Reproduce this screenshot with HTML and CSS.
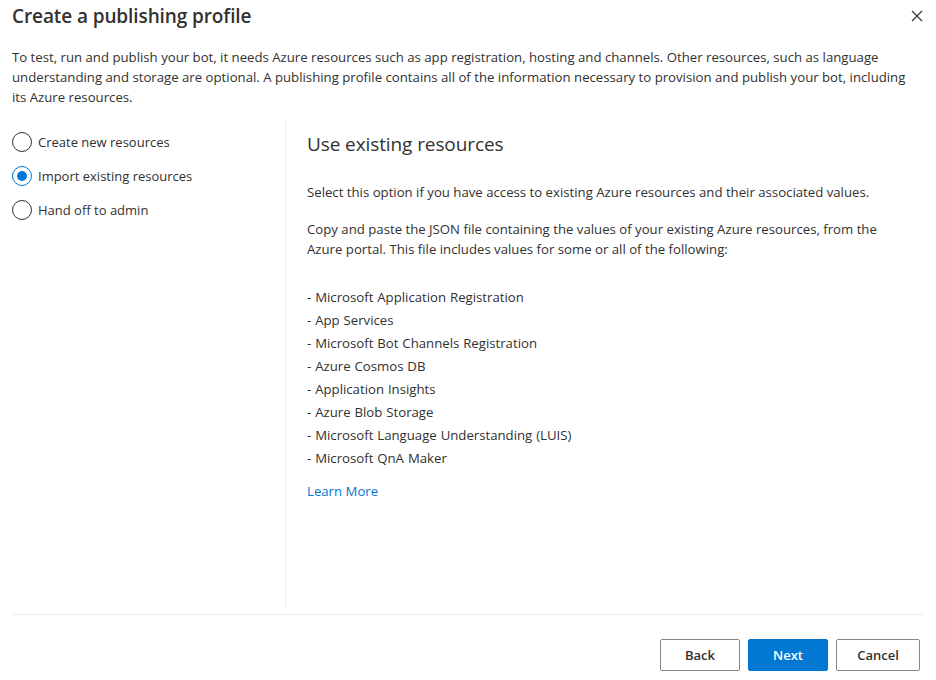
FILE: index.html
```html
<!DOCTYPE html>
<html>
<head>
<meta charset="utf-8">
<link rel="stylesheet" href="styles.css">
</head>
<body>
<div class="dialog">
  <div class="header">
    <h1 class="title">Create a publishing profile</h1>
    <button class="close" aria-label="Close">
      <svg width="12" height="12" viewBox="0 0 12 12"><path d="M1 1 L11 11 M11 1 L1 11" stroke="#323130" stroke-width="1.1" fill="none"/></svg>
    </button>
  </div>
  <p class="intro">To test, run and publish your bot, it needs Azure resources such as app registration, hosting and channels. Other resources, such as language understanding and storage are optional. A publishing profile contains all of the information necessary to provision and publish your bot, including its Azure resources.</p>
  <div class="content">
    <div class="options">
      <label class="option"><span class="radio"></span>Create new resources</label>
      <label class="option"><span class="radio checked"></span>Import existing resources</label>
      <label class="option"><span class="radio"></span>Hand off to admin</label>
    </div>
    <div class="panel">
      <h2 class="panel-title">Use existing resources</h2>
      <p class="p1">Select this option if you have access to existing Azure resources and their associated values.</p>
      <p class="p2">Copy and paste the JSON file containing the values of your existing Azure resources, from the Azure portal. This file includes values for some or all of the following:</p>
      <ul class="list">
        <li>- Microsoft Application Registration</li>
        <li>- App Services</li>
        <li>- Microsoft Bot Channels Registration</li>
        <li>- Azure Cosmos DB</li>
        <li>- Application Insights</li>
        <li>- Azure Blob Storage</li>
        <li>- Microsoft Language Understanding (LUIS)</li>
        <li>- Microsoft QnA Maker</li>
      </ul>
      <a class="link" href="#">Learn More</a>
    </div>
  </div>
  <div class="footer">
    <button class="btn">Back</button>
    <button class="btn primary">Next</button>
    <button class="btn cancel">Cancel</button>
  </div>
</div>
</body>
</html>
```
FILE: styles.css
```css
* { box-sizing: border-box; }
html, body { margin: 0; padding: 0; background: #fff; }
body {
  font-family: "Segoe UI", "Open Sans", "Noto Sans", sans-serif;
  font-size: 13.2px;
  color: #323130;
}
.dialog { padding: 0 12px; width: 936px; height: 680px; }
.header {
  display: flex;
  justify-content: space-between;
  align-items: center;
  padding-top: 2px;
  height: 30px;
}
.title {
  margin: 0;
  font-size: 19px;
  font-weight: 600;
  line-height: 28px;
  color: #323130;
  letter-spacing: -0.1px;
}
.close {
  border: 0;
  background: none;
  padding: 0;
  margin-right: 1px;
  width: 12px;
  height: 12px;
  display: flex;
}
.intro {
  margin: 17px 0 0;
  line-height: 20px;
  width: 902px;
}
.content {
  display: flex;
  margin-top: 15px;
  height: 484px;
}
.options {
  width: 274px;
  border-right: 1px solid #edebe9;
  padding-top: 10px;
  display: flex;
  flex-direction: column;
  gap: 14px;
}
.option {
  display: flex;
  align-items: center;
  height: 20px;
  line-height: 20px;
  font-size: 13px;
}
.radio {
  width: 20px;
  height: 20px;
  border: 1px solid #323130;
  border-radius: 50%;
  margin-right: 6px;
  position: relative;
  flex: none;
}
.radio.checked { border-color: #0078d4; }
.radio.checked::after {
  content: "";
  position: absolute;
  left: 4px;
  top: 4px;
  width: 10px;
  height: 10px;
  border-radius: 50%;
  background: #0078d4;
}
.panel {
  padding-left: 21px;
  flex: 1;
}
.panel-title {
  margin: 8px 0 0;
  font-size: 19px;
  font-weight: 400;
  line-height: 28px;
  letter-spacing: -0.1px;
}
.p1 { margin: 24px 0 0; line-height: 20px; }
.p2 { margin: 17px 0 0; line-height: 20px; width: 590px; }
.list {
  list-style: none;
  margin: 27px 0 0;
  padding: 0;
}
.list li { line-height: 23px; height: 23px; word-spacing: 0.5px; }
.link {
  display: block;
  margin-top: 11px;
  line-height: 20px;
  color: #0078d4;
  text-decoration: none;
}
.footer {
  border-top: 1px solid #edebe9;
  margin-top: 8px;
  padding-top: 24px;
  display: flex;
  justify-content: flex-end;
  gap: 8px;
  padding-right: 4px;
}
.btn {
  font-family: inherit;
  font-size: 13px;
  font-weight: 600;
  height: 32px;
  min-width: 80px;
  padding: 0 16px;
  border: 1px solid #8a8886;
  border-radius: 2px;
  background: #fff;
  color: #323130;
}
.btn.primary {
  background: #0078d4;
  border-color: #0078d4;
  color: #fff;
}
.btn.cancel { min-width: 84px; }
```
